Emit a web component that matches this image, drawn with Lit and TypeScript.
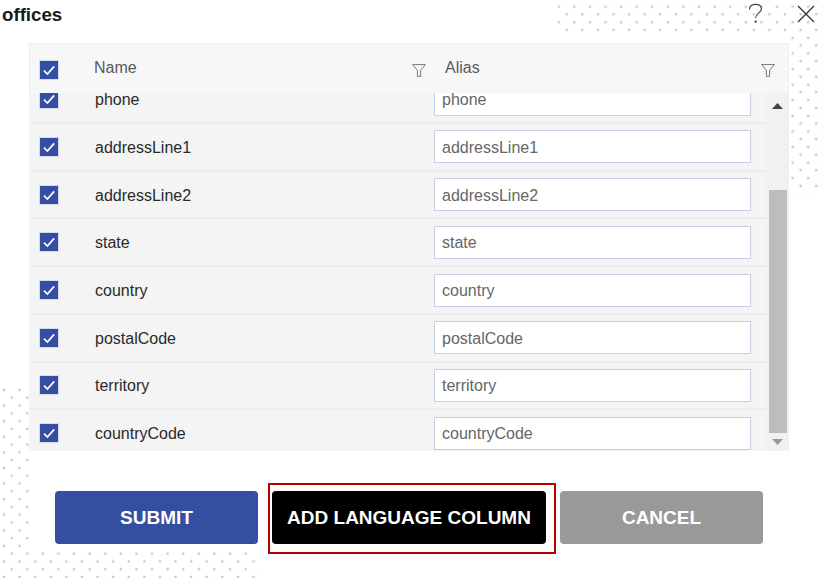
import { LitElement, html, css, svg } from "lit";
import { customElement } from "lit/decorators.js";

const FIELDS = ["phone", "addressLine1", "addressLine2", "state", "country", "postalCode", "territory", "countryCode"];

const check = html`<span class="cb"><svg width="14" height="12" viewBox="0 0 14 12"><path d="M2 6.6 L5.4 10 L12.2 2.4" fill="none" stroke="#fff" stroke-width="1.7"/></svg></span>`;
const funnel = svg`<svg class="funnel" width="14" height="13" viewBox="0 0 14 13"><path d="M0.6 0.6 H13.4 L8.6 6.4 V12.4 H5.4 V6.4 Z" fill="none" stroke="#777" stroke-width="1"/></svg>`;

@customElement("app-root")
export class AppRoot extends LitElement {
  static styles = css`
    :host {
      display: block;
      position: relative;
      width: 823px;
      height: 578px;
      overflow: hidden;
      background: #fff;
      font-family: "Liberation Sans", Arial, sans-serif;
    }
    .dots {
      position: absolute;
      inset: 0;
      background-size: 15.6px 15.6px;
      background-image:
        radial-gradient(circle at 7.8px 7.8px, #bcc8e6 0.9px, transparent 1.7px),
        radial-gradient(circle at 7.8px 7.8px, #bcc8e6 0.9px, transparent 1.7px);
    }
    .dots.tr {
      background-position: 566.5px -1.1px, 558.9px 6.5px;
      clip-path: polygon(558px 0, 823px 0, 823px 193px, 790px 193px, 790px 32px, 558px 32px);
    }
    .dots.bl {
      background-position: -3.8px 382.2px, 3.9px 389.9px;
      clip-path: polygon(0 386px, 29px 386px, 29px 552px, 260px 552px, 260px 578px, 0 578px);
    }
    .content {
      position: relative;
      display: flex;
      flex-direction: column;
      height: 578px;
    }
    .top {
      display: flex;
      align-items: flex-start;
      height: 43px;
    }
    h1 {
      margin: 5px 0 0 2px;
      font-size: 18.7px;
      line-height: 20px;
      font-weight: 700;
      color: #1a1a1a;
      flex: 1;
    }
    .help { margin: 3px 0 0 0; }
    .close { margin: 5px 8px 0 34px; }
    .table {
      margin-left: 29px;
      width: 760px;
      display: flex;
      flex-direction: column;
    }
    .head {
      height: 50px;
      box-sizing: border-box;
      background: #f7f7f7;
      border: 1px solid #eeeeee;
      border-bottom: 0;
      display: flex;
      align-items: center;
      color: #5a5a5a;
      font-size: 16px;
    }
    .head .cb { margin: 2px 0 0 9px; }
    .h-name {
      margin: -1px 0 0 35px;
      width: 318px;
    }
    .head .funnel { margin-top: 3px; }
    .h-alias {
      margin: -1px 0 0 19px;
      width: 316px;
    }
    .body {
      height: 358px;
      display: flex;
      overflow: hidden;
    }
    .rows {
      flex: 1;
      margin-top: -16.6px;
      background: #f4f4f4;
      align-self: flex-start;
    }
    .row {
      height: 47.7px;
      box-sizing: border-box;
      display: flex;
      align-items: center;
      border-bottom: 2px solid #ececec;
      padding-left: 10px;
      font-size: 16px;
      color: #222;
    }
    .cb {
      width: 20px;
      height: 20px;
      flex: none;
      box-sizing: border-box;
      background: #344ea1;
      border: 1px solid #d5dbec;
      display: flex;
      align-items: center;
      justify-content: center;
    }
    .name {
      margin-left: 36px;
      width: 339px;
      font-size: 16px;
      line-height: 14px;
      color: #2a2a2a;
      padding-top: 2px;
    }
    .alias {
      width: 317px;
      height: 33px;
      box-sizing: border-box;
      border: 1px solid #c8cfe0;
      background: #fff;
      padding: 2px 0 0 7px;
      display: flex;
      align-items: center;
      font-size: 16px;
      line-height: 14px;
      color: #666;
    }
    .scroll {
      width: 23px;
      background: #f1f1f1;
      display: flex;
      flex-direction: column;
      align-items: center;
    }
    .scroll .up { margin-top: 10px; }
    .thumb {
      width: 18px;
      height: 243px;
      margin-top: 81px;
      background: #bdbdbd;
    }
    .scroll .down { margin-top: 6px; }
    .actions {
      display: flex;
      gap: 14px;
      margin: 40px 0 0 55px;
    }
    .btn {
      position: relative;
      width: 203px;
      height: 53px;
      border-radius: 4px;
      display: flex;
      align-items: center;
      justify-content: center;
      color: #fff;
      font-weight: 700;
      font-size: 19px;
      padding-top: 1px;
      box-sizing: border-box;
    }
    .submit { background: #344ea1; }
    .add { background: #000; width: 274px; }
    .cancel { background: #999; }
    .ring {
      position: absolute;
      left: -4px;
      top: -8px;
      width: 288px;
      height: 71px;
      box-sizing: border-box;
      border: 2px solid #b80000;
    }
  `;

  render() {
    return html`
      <div class="dots tr"></div>
      <div class="dots bl"></div>
      <div class="content">
        <div class="top">
          <h1>offices</h1>
          <svg class="help" width="15" height="21" viewBox="0 0 15 21">
            <path d="M1.5 6.5 C1.5 3 4 1.3 7.4 1.3 C11 1.3 13.4 3.2 13.4 6 C13.4 9.8 8 10 7.6 15" fill="none" stroke="#444" stroke-width="1.2"/>
            <circle cx="7.6" cy="18.6" r="1.2" fill="#444"/>
          </svg>
          <svg class="close" width="18" height="18" viewBox="0 0 18 18">
            <path d="M1 1 L17 17 M17 1 L1 17" fill="none" stroke="#333" stroke-width="1.3"/>
          </svg>
        </div>
        <div class="table">
          <div class="head">
            ${check}
            <div class="h-name">Name</div>
            ${funnel}
            <div class="h-alias">Alias</div>
            ${funnel}
          </div>
          <div class="body">
            <div class="rows">
              ${FIELDS.map(
                (f) => html`<div class="row">${check}<div class="name">${f}</div><div class="alias">${f}</div></div>`
              )}
            </div>
            <div class="scroll">
              <svg class="up" width="11" height="6" viewBox="0 0 11 6"><path d="M5.5 0 L11 6 H0 Z" fill="#444"/></svg>
              <div class="thumb"></div>
              <svg class="down" width="11" height="6" viewBox="0 0 11 6"><path d="M0 0 H11 L5.5 6 Z" fill="#9a9a9a"/></svg>
            </div>
          </div>
        </div>
        <div class="actions">
          <div class="btn submit">SUBMIT</div>
          <div class="btn add">ADD LANGUAGE COLUMN<span class="ring"></span></div>
          <div class="btn cancel">CANCEL</div>
        </div>
      </div>
    `;
  }
}
